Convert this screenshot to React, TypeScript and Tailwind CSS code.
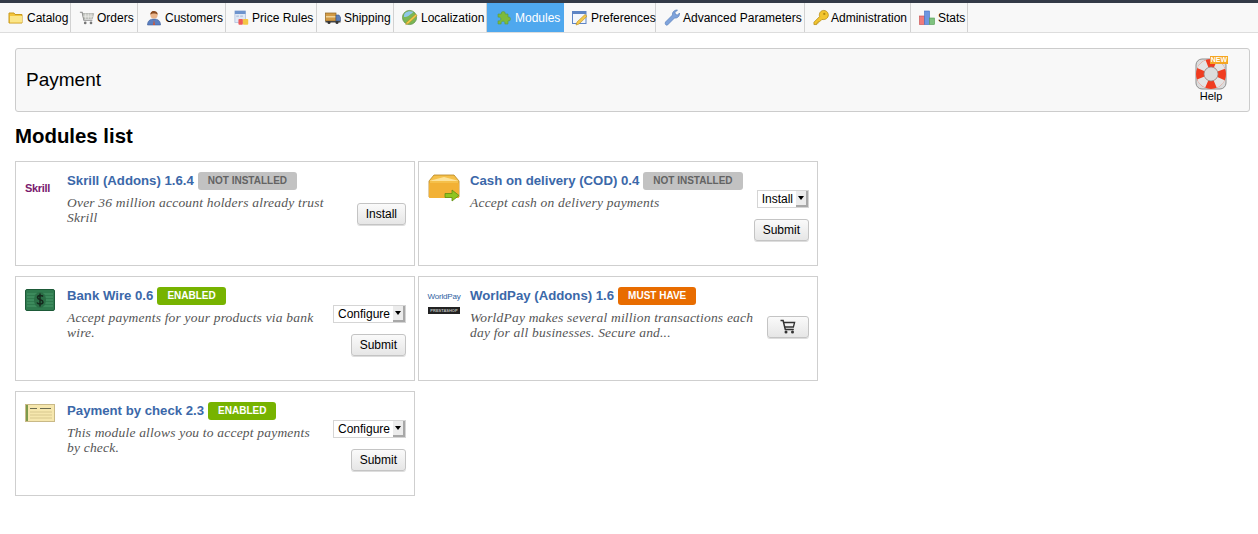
import { ReactNode } from "react";

function FolderIcon() {
  return (
    <svg width="16" height="16" viewBox="0 0 16 16">
      <path d="M1 3h5l1 1.5h7V13H1z" fill="#f3c53c" stroke="#c99a1c" strokeWidth="1" />
      <rect x="2" y="6" width="12" height="6.5" fill="#fbe68a" />
    </svg>
  );
}

function CartIcon() {
  return (
    <svg width="18" height="16" viewBox="0 0 18 16">
      <path d="M1 1.5h2.5l2 9h9.5" fill="none" stroke="#8a8a8a" strokeWidth="1.3" />
      <path d="M4.2 3h12.3l-1.5 5.8H5.4z" fill="#c9cbc6" stroke="#9a9c98" strokeWidth="0.7" />
      <path d="M7.5 3v6M10.5 3v6M13.5 3v6M4.8 6h11" stroke="#ecedea" strokeWidth="0.8" />
      <circle cx="7" cy="13.5" r="1.5" fill="#777" />
      <circle cx="13.5" cy="13.5" r="1.5" fill="#777" />
    </svg>
  );
}

function CustomerIcon() {
  return (
    <svg width="16" height="16" viewBox="0 0 16 16">
      <path d="M1.5 15c0-4 2.5-6 6.5-6s6.500 2 6.500 6z" fill="#5a7fc0" stroke="#3c5c98" strokeWidth="0.6" />
      <circle cx="8" cy="5" r="3.600" fill="#e9b48a" />
      <path d="M4.300 4.500C4.500 1.500 6.500 1 8 1s3.600.7 3.700 3.500C10 3 6 3 4.300 4.500z" fill="#8a4b20" />
      <path d="M8 9.500 7 15h2z" fill="#d8542c" />
    </svg>
  );
}

function PriceIcon() {
  return (
    <svg width="18" height="18" viewBox="0 0 18 18">
      <rect x="1" y="1" width="12" height="13" fill="#dfe8f6" stroke="#a9bbd8" strokeWidth="0.8" />
      <rect x="1" y="1" width="12" height="3.500" fill="#6d93cd" />
      <rect x="2.500" y="6" width="3" height="2" fill="#b9c9e2" />
      <rect x="7" y="6" width="3" height="2" fill="#b9c9e2" />
      <rect x="5" y="10" width="5" height="6.500" rx="1" fill="#ee5a5a" />
      <rect x="10" y="10" width="6" height="6.500" rx="1" fill="#f4c644" />
    </svg>
  );
}

function TruckIcon() {
  return (
    <svg width="16" height="14" viewBox="0 0 16 14">
      <rect x="0.500" y="2" width="10.500" height="8" fill="#d29a45" stroke="#8f6420" strokeWidth="0.7" />
      <rect x="1" y="5" width="9.500" height="1.500" fill="#f0d49a" />
      <path d="M11 4h3l1.500 2.500V10H11z" fill="#5d7fb8" stroke="#3b5788" strokeWidth="0.6" />
      <rect x="0.500" y="10" width="15" height="1.500" fill="#444" />
      <circle cx="4" cy="11.500" r="1.500" fill="#333" />
      <circle cx="12" cy="11.500" r="1.500" fill="#333" />
    </svg>
  );
}

function GlobeIcon() {
  return (
    <svg width="17" height="17" viewBox="0 0 17 17">
      <circle cx="8" cy="8.500" r="7.500" fill="#79b755" stroke="#5d8f46" strokeWidth="0.8" />
      <path d="M3 4c3-2.500 6-2.500 9-1.500-1 2-3 2.500-4.500 4S4 8 2 8c0-1.500.3-3 1-4z" fill="#8fc7e8" />
      <path d="M5 13.500 14.500 5l1.500 1.500L7 15l-3 1z" fill="#f2c94a" stroke="#b58d20" strokeWidth="0.6" />
    </svg>
  );
}

function PuzzleIcon() {
  return (
    <svg width="15" height="15" viewBox="0 0 15 15">
      <path d="M2 4h3.300a2 2 0 1 1 3.900 0H12v3a2 2 0 1 1 0 3.900V14H8.800a2 2 0 1 0-3.600 0H2v-3.200a2 2 0 1 0 0-3.600z" fill="#7dba3c" stroke="#5c9a3a" strokeWidth="0.6" />
    </svg>
  );
}

function PrefsIcon() {
  return (
    <svg width="16" height="16" viewBox="0 0 16 16">
      <rect x="0.500" y="1.500" width="13.500" height="12" fill="#f2f6fc" stroke="#5d84c4" strokeWidth="1" />
      <rect x="0.500" y="1.500" width="13.500" height="2.500" fill="#5d84c4" />
      <path d="M5 12 13 4.500l2 1.800L7 14l-3 1z" fill="#f3c84c" stroke="#b78c1e" strokeWidth="0.6" />
    </svg>
  );
}

function WrenchIcon() {
  return (
    <svg width="16" height="17" viewBox="0 0 16 17">
      <path d="M1.500 13 8.500 6C8 3.500 10 .8 13.500 1L11 3.500l.5 2 2 .5L15.500 4c.4 3.500-2.500 5.500-5 5L3.500 16c-1.500.8-3-1.200-2-3z" fill="#7fa3db" stroke="#587fbc" strokeWidth="0.7" />
    </svg>
  );
}

function KeyIcon() {
  return (
    <svg width="17" height="17" viewBox="0 0 17 17">
      <path d="M7 7.500 1 13.500V16h3v-1.500h1.500V13H7l2.500-2.500c3.500 1 7-1.500 6.800-5C16 2.500 13.500.8 11 1 8 1.300 6 4 7 7.500z" fill="#f2c530" stroke="#b48a12" strokeWidth="0.8" />
      <circle cx="12" cy="4.700" r="1.200" fill="#b48a12" />
    </svg>
  );
}

function StatsIcon() {
  return (
    <svg width="16" height="16" viewBox="0 0 16 16">
      <rect x="0.500" y="6" width="5" height="8.500" fill="#ef7b7b" stroke="#c44a4a" strokeWidth="0.6" />
      <rect x="5.500" y="1" width="5" height="13.500" fill="#6d96e0" stroke="#3f6cc0" strokeWidth="0.6" />
      <rect x="10.500" y="8" width="5" height="6.500" fill="#7fc27f" stroke="#4f9a4f" strokeWidth="0.6" />
    </svg>
  );
}

function HelpIcon() {
  return (
    <svg width="32" height="32" viewBox="0 0 32 32">
      <rect x="1" y="1" width="30" height="30" rx="6" fill="#dcdcdc" stroke="#8f8f8f" strokeWidth="1" />
      <circle cx="16" cy="16" r="11" fill="none" stroke="#f03c20" strokeWidth="8" />
      <circle cx="16" cy="16" r="11" fill="none" stroke="#e4e4e4" strokeWidth="8" strokeDasharray="8.640 8.640" strokeDashoffset="4.320" transform="rotate(45 16 16)" />
      <circle cx="16" cy="16" r="7" fill="none" stroke="#8a8a8a" strokeWidth="0.7" />
    </svg>
  );
}

function CashIcon() {
  return (
    <svg width="32" height="28" viewBox="0 0 32 28">
      <path d="M1 7 6 1h20l5 6v16H1z" fill="#f5c04a" stroke="#b58420" strokeWidth="0.8" />
      <path d="M1 7h30L16 3z" fill="#fde39a" />
      <rect x="1" y="9" width="30" height="15" rx="1" fill="#f2b135" />
      <path d="M17 19.500h7V16l7 5.500-7 5.500v-3.500h-7z" fill="#8ec51f" stroke="#5f8f12" strokeWidth="0.8" />
    </svg>
  );
}

function BankIcon() {
  return (
    <svg width="30" height="22" viewBox="0 0 30 22">
      <rect x="0.500" y="0.500" width="29" height="21" rx="1.500" fill="#2f7a4e" stroke="#1d5a38" />
      <path d="M2 5h26M2 8h26M2 11h26M2 14h26M2 17h26" stroke="#4b9a6b" strokeWidth="1" />
      <ellipse cx="15" cy="11" rx="6" ry="8" fill="#2a6e46" />
      <path d="M18 7.500c-1-1.500-5.500-1.500-5.500 1S18 10.500 18 13s-5 2.500-6 .5M15 4.500v13" fill="none" stroke="#15291d" strokeWidth="1.500" />
    </svg>
  );
}

function CheckIcon() {
  return (
    <svg width="30" height="18" viewBox="0 0 30 18">
      <rect x="0.500" y="0.500" width="29" height="17" fill="#f6e7ae" stroke="#c9b987" />
      <rect x="1" y="1" width="2" height="16" fill="#7c9a4b" />
      <path d="M5 4.500h7M15 4.500h11" stroke="#6b6b50" strokeWidth="1" />
      <path d="M5 8h22M5 11h22M5 14h22" stroke="#d8c88f" strokeWidth="1" />
    </svg>
  );
}

function BuyIcon() {
  return (
    <svg width="16" height="15" viewBox="0 0 16 15">
      <path d="M.5 1.500h2.600L5.300 10.500h8.500" fill="none" stroke="#333" strokeWidth="1.500" />
      <path d="M3.600 3.500h11l-1.200 4.500H4.700" fill="none" stroke="#333" strokeWidth="1.300" />
      <circle cx="6" cy="13" r="1.500" fill="#333" />
      <circle cx="12.500" cy="13" r="1.500" fill="#333" />
    </svg>
  );
}

const tabs: { label: string; icon: ReactNode; width: string; gap: string; active?: boolean }[] = [
  { label: "Catalog", icon: <FolderIcon />, width: "w-[71px]", gap: "gap-[3px]" },
  { label: "Orders", icon: <CartIcon />, width: "w-[67px]", gap: "gap-[2px]" },
  { label: "Customers", icon: <CustomerIcon />, width: "w-[88px]", gap: "gap-[3px]" },
  { label: "Price Rules", icon: <PriceIcon />, width: "w-[91px]", gap: "gap-[2px]" },
  { label: "Shipping", icon: <TruckIcon />, width: "w-[77px]", gap: "gap-[3px]" },
  { label: "Localization", icon: <GlobeIcon />, width: "w-[93px]", gap: "gap-[3px]" },
  { label: "Modules", icon: <PuzzleIcon />, width: "w-[77px]", gap: "gap-[4px]", active: true },
  { label: "Preferences", icon: <PrefsIcon />, width: "w-[92px]", gap: "gap-[3px]" },
  { label: "Advanced Parameters", icon: <WrenchIcon />, width: "w-[149px]", gap: "gap-[3px]" },
  { label: "Administration", icon: <KeyIcon />, width: "w-[106px]", gap: "gap-[2px]" },
  { label: "Stats", icon: <StatsIcon />, width: "w-[57px]", gap: "gap-[3px]" },
];

function Badge({ kind }: { kind: "off" | "on" | "must" }) {
  if (kind === "off") {
    return <span className="h-[18px] px-[10px] rounded-[3px] bg-[#c2c2c2] text-[#636363] text-[10px] font-bold leading-[18px]">NOT INSTALLED</span>;
  }
  if (kind === "on") {
    return <span className="h-[18px] px-[10px] rounded-[3px] bg-[#77b300] text-white text-[10px] font-bold leading-[18px]">ENABLED</span>;
  }
  return <span className="h-[18px] px-[10px] rounded-[3px] bg-[#e86c00] text-white text-[10px] font-bold leading-[18px]">MUST HAVE</span>;
}

function FakeSelect({ label }: { label: string }) {
  return (
    <div className="flex items-stretch h-[18px] bg-white border border-[#d5d5d5] pl-1 text-[12px] leading-[16px] text-black">
      <span>{label}</span>
      <span className="flex items-center justify-center w-[12px] ml-[3px] bg-[#ececec] border-r-2 border-b-2 border-[#a8a8a8]">
        <span className="border-x-[3px] border-t-[4px] border-x-transparent border-t-black" />
      </span>
    </div>
  );
}

function Btn({ children }: { children: ReactNode }) {
  return (
    <button className="h-[22px] px-2 rounded-[3px] border border-[#c4c4c4] bg-gradient-to-b from-[#fafafa] to-[#e6e6e6] text-[12px] text-black shadow-[0_1px_0_#ddd]">
      {children}
    </button>
  );
}

function SubmitStack({ select }: { select: string }) {
  return (
    <div className="flex flex-col items-end gap-[11px] mt-1">
      <FakeSelect label={select} />
      <Btn>Submit</Btn>
    </div>
  );
}

function Card({
  logo,
  title,
  badge,
  desc,
  actions,
  descWidth,
}: {
  logo: ReactNode;
  title: string;
  badge: "off" | "on" | "must";
  desc: string;
  actions: ReactNode;
  descWidth: string;
}) {
  return (
    <div className="flex items-center border border-[#cfcfcf] pl-[9px] pr-[8px]">
      <div className="self-start w-[42px] shrink-0 pt-[12px] flex">{logo}</div>
      <div className="self-start flex-1 pt-[9px] min-w-0">
        <div className="flex items-center gap-[4px]">
          <span className="text-[13.2px] font-bold text-[#3b68a9] whitespace-nowrap">{title}</span>
          <Badge kind={badge} />
        </div>
        <p className={`${descWidth} mt-[4px] text-[13.5px] leading-[15px] italic text-[#555] tracking-[0.2px] font-[Liberation_Serif,serif]`}>{desc}</p>
      </div>
      <div className="shrink-0">{actions}</div>
    </div>
  );
}

export default function App() {
  return (
    <div className="bg-white min-h-[534px] font-[Liberation_Sans,Arial,sans-serif] text-black">
      <div className="h-[3px] bg-[#333a47]" />
      <nav className="flex h-[30px] bg-[#f8f8f8] border-b border-[#dddddd]">
        {tabs.map((t) => (
          <a
            key={t.label}
            className={`${t.width} ${t.gap} flex items-center pl-2 pr-1 text-[12px] whitespace-nowrap ${
              t.active ? "bg-[#4fa8ee] text-white" : "border-r border-[#d2d2d2] text-black"
            }`}
          >
            <span className="flex w-[16px] shrink-0 justify-center">{t.icon}</span>
            {t.label}
          </a>
        ))}
      </nav>

      <div className="pt-[15px] px-[15px] pr-[8px]">
        <header className="flex items-center justify-between h-[64px] border border-[#cccccc] rounded-[3px] bg-[#f8f8f8] pl-[10px] pr-[22px] mr-0">
          <h1 className="text-[19px]">Payment</h1>
          <div className="flex flex-col items-center">
            <div className="relative flex">
              <HelpIcon />
              <span className="absolute -top-[2px] -right-[1px] px-[1px] bg-[#f5a623] text-white text-[7px] leading-[8px] font-bold">NEW</span>
            </div>
            <span className="text-[11px] leading-[13px]">Help</span>
          </div>
        </header>

        <h2 className="mt-[12px] text-[20.400px] leading-[25px] font-bold">Modules list</h2>

        <div className="mt-[12px] grid grid-cols-[400px_400px] auto-rows-[105px] gap-x-[3px] gap-y-[10px]">
          <Card
            logo={<span className="mt-[6px] text-[11px] font-bold tracking-[-0.3px] text-[#7a1a6e]">Skrill</span>}
            title="Skrill (Addons) 1.6.4"
            badge="off"
            desc="Over 36 million account holders already trust Skrill"
            descWidth="max-w-[285px]"
            actions={<div className="mt-[-2px]"><Btn>Install</Btn></div>}
          />
          <Card
            logo={<CashIcon />}
            title="Cash on delivery (COD) 0.4"
            badge="off"
            desc="Accept cash on delivery payments"
            descWidth="max-w-[285px]"
            actions={<SubmitStack select="Install" />}
          />
          <Card
            logo={<BankIcon />}
            title="Bank Wire 0.6"
            badge="on"
            desc="Accept payments for your products via bank wire."
            descWidth="max-w-[250px]"
            actions={<SubmitStack select="Configure" />}
          />
          <Card
            logo={
              <div className="flex flex-col items-center w-[32px] mt-[3px]">
                <span className="text-[8px] leading-[10px] text-[#2f5f9f] tracking-[-0.2px]">WorldPay</span>
                <span className="mt-[5px] w-[32px] h-[7px] bg-[#222] text-[#bbb] text-[4px] leading-[7px] text-center font-bold">PRESTASHOP</span>
              </div>
            }
            title="WorldPay (Addons) 1.6"
            badge="must"
            desc="WorldPay makes several million transactions each day for all businesses. Secure and..."
            descWidth="max-w-[285px]"
            actions={<Btn><span className="flex px-[4px]"><BuyIcon /></span></Btn>}
          />
          <Card
            logo={<CheckIcon />}
            title="Payment by check 2.3"
            badge="on"
            desc="This module allows you to accept payments by check."
            descWidth="max-w-[258px]"
            actions={<SubmitStack select="Configure" />}
          />
        </div>
      </div>
    </div>
  );
}
